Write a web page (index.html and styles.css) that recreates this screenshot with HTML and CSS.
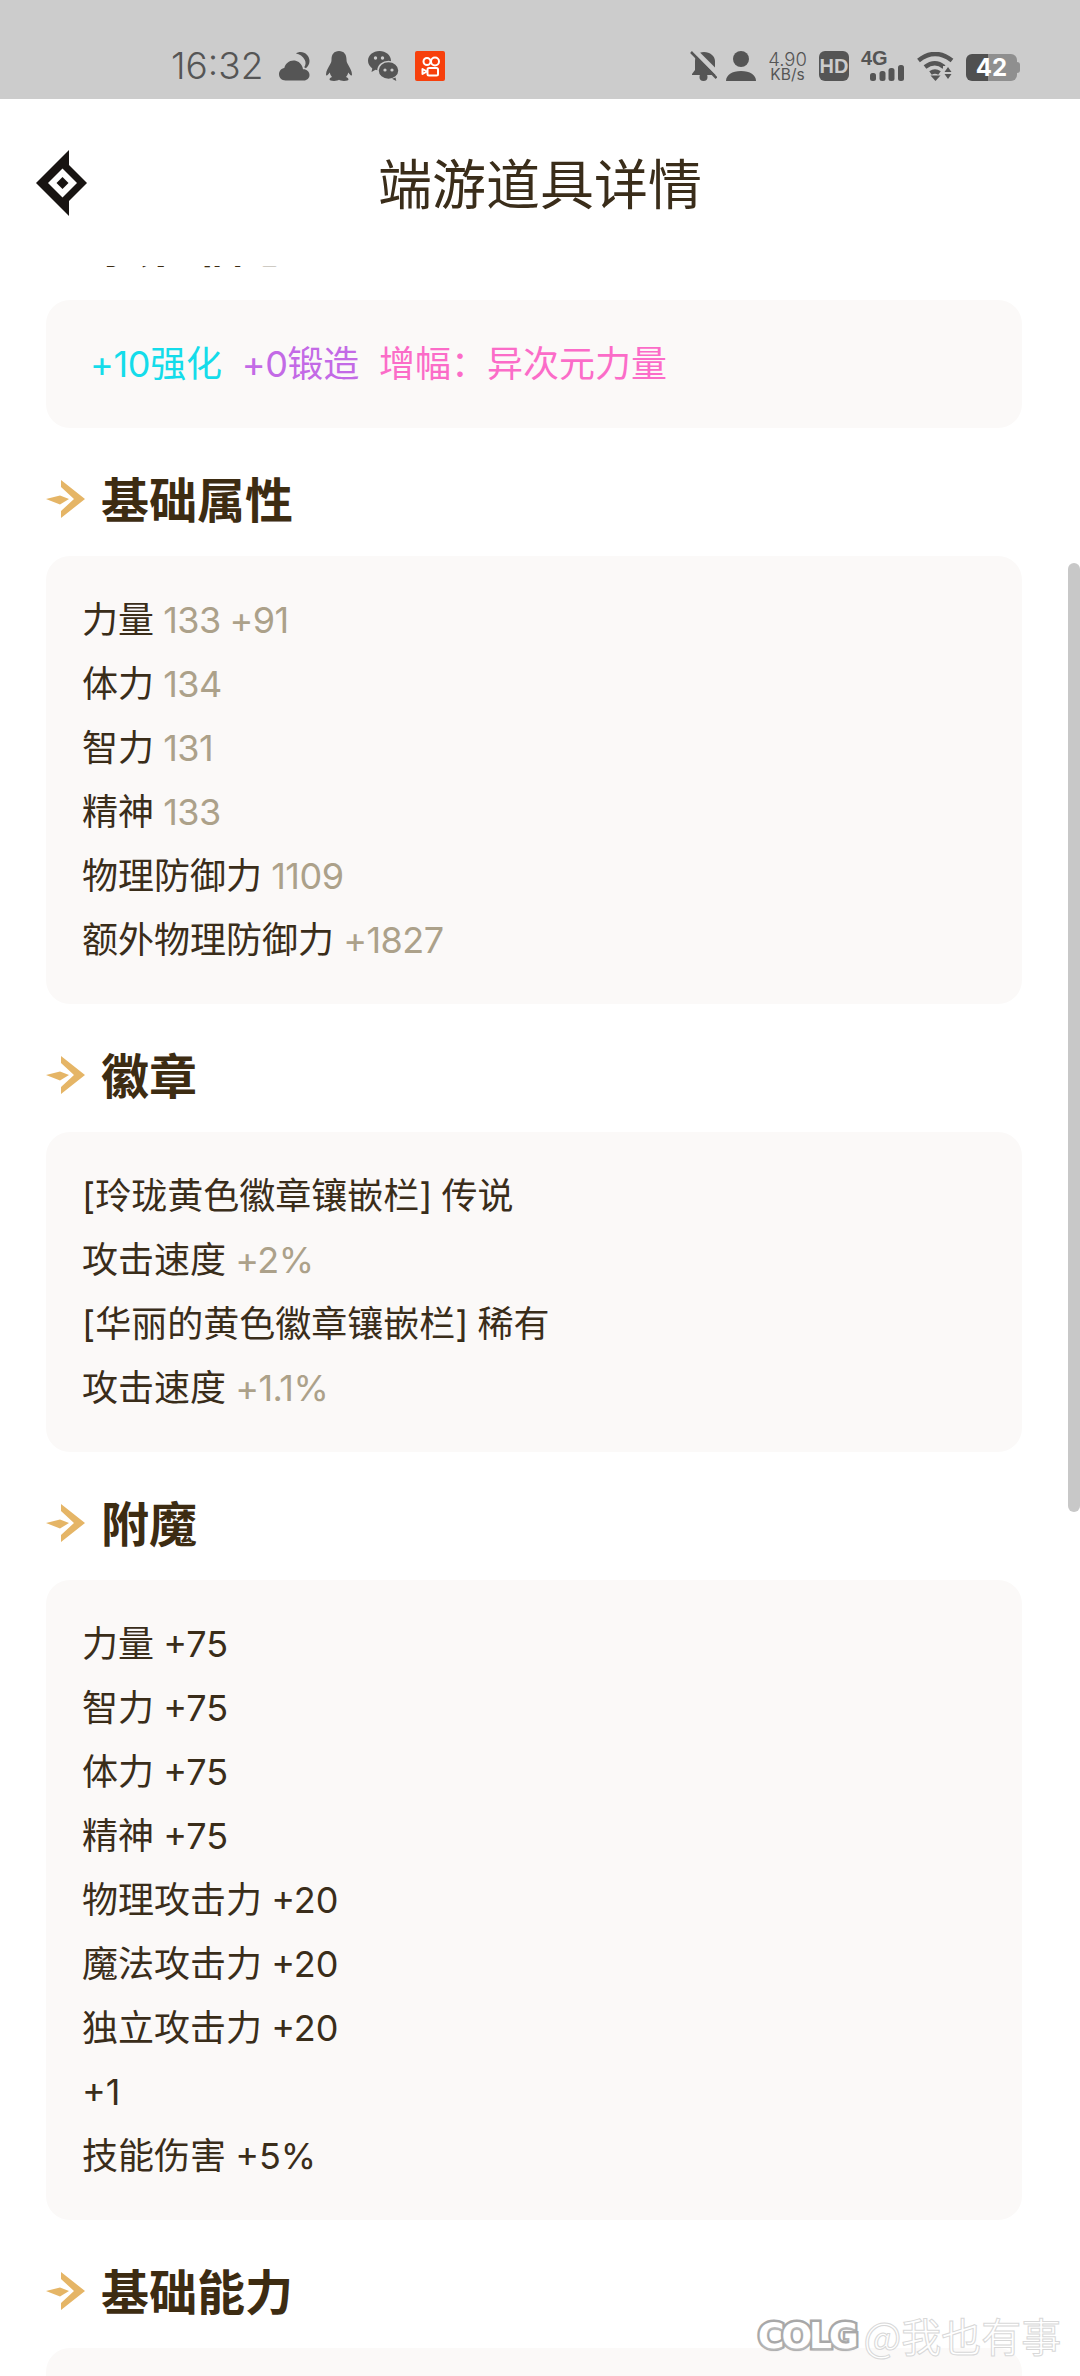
FILE: index.html
```html
<!DOCTYPE html>
<html lang="zh-CN">
<head>
    <meta charset="UTF-8">
    <meta name="viewport" content="width=device-width, initial-scale=1.0">
    <title>端游道具详情</title>
    <link rel="stylesheet" href="styles.css">
</head>
<body>

    <div class="statusbar">
        <div class="status-left">
            <span class="time">16:32</span>
            <svg class="ic-cloud" viewBox="0 0 31 29"><path d="M6.500 28.500C2.800 28.500 0 25.800 0 22.300c0-3.200 2.300-5.700 5.300-6.200C6.300 11.700 10 8.500 14.500 8.500c3.900 0 7.200 2.400 8.600 5.800.5 1 .8 2 .9 3 3.600-.2 6.500 2.300 6.500 5.700 0 3.100-2.400 5.500-5.700 5.500z"/><path d="M17 1.500C18.300.5 19.800 0 21.500 0c5 0 9 4 9 9 0 3-1.400 5.600-3.600 7.200-.5-.4-1.100-.7-1.700-.9C26.800 12.800 27 10.500 25.800 8 24 4.300 20.500 2 17 1.500z"/></svg>
            <svg class="ic-qq" viewBox="0 0 26 30"><path d="M13 0C8 0 5.500 3.500 5.500 8.500c0 2-.5 3.500-1.500 5C2.500 16 0 20 0 23.500c0 1 .6 1.200 1.300.7.900-.7 1.700-1.600 2.400-2.700.4 1.700 1.200 3.200 2.300 4.400-1.500.6-2.500 1.400-2.500 2.400 0 1 1.500 1.700 4.500 1.700 2.500 0 4-.5 5-1.200 1 .7 2.500 1.200 5 1.200 3 0 4.500-.7 4.500-1.700 0-1-1-1.800-2.500-2.400 1.100-1.200 1.900-2.700 2.300-4.400.7 1.100 1.500 2 2.400 2.700.7.5 1.300.3 1.300-.7 0-3.500-2.500-7.500-4-10-1-1.500-1.500-3-1.500-5C20.500 3.500 18 0 13 0z"/></svg>
            <svg class="ic-wechat" viewBox="0 0 31 30">
                <path d="M11.500 0C5.100 0 0 4.300 0 9.800c0 3.100 1.700 5.800 4.300 7.600L3.500 21l4-2.200c1.200.4 2.600.7 4 .7 6.400 0 11.500-4.300 11.500-9.700S17.900 0 11.500 0z"/>
                <ellipse class="ic-cut" cx="20.500" cy="19.500" rx="10.500" ry="9"/>
                <path d="M27.500 26.500l.8 3.500-4.300-2.200z"/>
                <circle class="ic-eye" cx="7.500" cy="7" r="1.700"/>
                <circle class="ic-eye" cx="14.500" cy="7" r="1.700"/>
                <circle class="ic-eye" cx="17" cy="19" r="1.600"/>
                <circle class="ic-eye" cx="24" cy="19" r="1.600"/>
            </svg>
            <svg class="ic-ks" viewBox="0 0 30 30">
                <rect width="30" height="30" rx="2" fill="#f7400c"/>
                <g fill="none" stroke="#fff" stroke-width="2">
                    <circle cx="12" cy="10.500" r="3.500"/>
                    <circle cx="20" cy="10.500" r="4"/>
                    <rect x="12.500" y="17" width="10.500" height="7.500" rx="1.500"/>
                    <path d="M12 20.500l-4.500-2.500v5z" stroke-linejoin="round"/>
                </g>
            </svg>
        </div>
        <div class="status-right">
            <svg class="ic-bell" viewBox="0 0 27 30">
                <path d="M14 1C8 1 5 5 5 10v9l-3 4v1h24v-1l-1-4v-9c0-5-5-9-11-9z"/>
                <circle cx="13.500" cy="26" r="4"/>
                <path class="ic-slash" d="M0 0l27 27"/>
                <path class="ic-line" d="M1 1l25.500 26"/>
            </svg>
            <svg class="ic-user" viewBox="0 0 30 30"><circle cx="15" cy="8" r="8"/><path d="M0 30c0-6 6-10 15-10s15 4 15 10z"/></svg>
            <div class="speed"><span class="speed-num">4.90</span><span class="speed-unit">KB/s</span></div>
            <div class="hd">HD</div>
            <div class="net">
                <span class="net-type">4G</span>
                <svg class="net-bars" viewBox="0 0 34 16"><rect x="0" y="8" width="6" height="8" rx="2.500"/><rect x="9.500" y="6" width="6" height="10" rx="2.500"/><rect x="18.500" y="3" width="6" height="13" rx="2.500"/><rect x="28" y="0" width="6" height="16" rx="2.500"/></svg>
            </div>
            <svg class="ic-wifi" viewBox="0 0 37 29">
                <g fill="none" stroke="#555" stroke-width="4.500">
                    <path d="M1.500 8.500Q18 -4.500 35 8.500"/>
                    <path d="M8 15Q18 7.500 27 15"/>
                    <path d="M13.500 21Q18 18 22.500 21"/>
                </g>
                <path d="M13.500 23.500h10L18.500 29z"/>
                <path class="ic-cut-fill" d="M26 14h11v15H26z"/>
                <path d="M31 15l3.500 5h-7zM27.500 22h7L31 27z"/>
            </svg>
            <div class="battery"><div class="batt-body">42</div><div class="batt-nub"></div></div>
        </div>
    </div>

    <div class="topbar">
        <svg class="logo" viewBox="0 0 51 66">
            <path fill="#181412" d="M33 0v15l18 18-18 18v15L0 33z"/>
            <path fill="#fff" d="M26.500 18.500l14.500 14.500-14.500 14.500-14.500-14.500z"/>
            <path fill="#181412" d="M26.500 27l6 6-6 6-6-6z"/>
        </svg>
        <h1 class="page-title">端游道具详情</h1>
    </div>

    <main class="scroller">
        <div class="content">
            <h2 class="sec-title"><svg class="arrow" viewBox="0 0 39 38"><path d="M15 0l24 19-24 19v-7l13-12-13-12z"/><path d="M0 19l14-3.500 9 3.500-9 5.500z"/></svg>强化信息</h2>
            <div class="card card-tags">
                <span class="tag-cyan">+10强化</span>
                <span class="tag-purple">+0锻造</span>
                <span class="tag-pink">增幅：异次元力量</span>
            </div>

            <h2 class="sec-title"><svg class="arrow" viewBox="0 0 39 38"><path d="M15 0l24 19-24 19v-7l13-12-13-12z"/><path d="M0 19l14-3.500 9 3.500-9 5.500z"/></svg>基础属性</h2>
            <div class="card">
                <p>力量 <span class="val">133 +91</span></p>
                <p>体力 <span class="val">134</span></p>
                <p>智力 <span class="val">131</span></p>
                <p>精神 <span class="val">133</span></p>
                <p>物理防御力 <span class="val">1109</span></p>
                <p>额外物理防御力 <span class="val">+1827</span></p>
            </div>

            <h2 class="sec-title"><svg class="arrow" viewBox="0 0 39 38"><path d="M15 0l24 19-24 19v-7l13-12-13-12z"/><path d="M0 19l14-3.500 9 3.500-9 5.500z"/></svg>徽章</h2>
            <div class="card">
                <p>[玲珑黄色徽章镶嵌栏] 传说</p>
                <p>攻击速度 <span class="val">+2%</span></p>
                <p>[华丽的黄色徽章镶嵌栏] 稀有</p>
                <p>攻击速度 <span class="val">+1.1%</span></p>
            </div>

            <h2 class="sec-title"><svg class="arrow" viewBox="0 0 39 38"><path d="M15 0l24 19-24 19v-7l13-12-13-12z"/><path d="M0 19l14-3.500 9 3.500-9 5.500z"/></svg>附魔</h2>
            <div class="card">
                <p>力量 +75</p>
                <p>智力 +75</p>
                <p>体力 +75</p>
                <p>精神 +75</p>
                <p>物理攻击力 +20</p>
                <p>魔法攻击力 +20</p>
                <p>独立攻击力 +20</p>
                <p>+1</p>
                <p>技能伤害 +5%</p>
            </div>

            <h2 class="sec-title"><svg class="arrow" viewBox="0 0 39 38"><path d="M15 0l24 19-24 19v-7l13-12-13-12z"/><path d="M0 19l14-3.500 9 3.500-9 5.500z"/></svg>基础能力</h2>
            <div class="card">
                <p>&nbsp;</p>
            </div>
        </div>
    </main>

    <div class="scrollbar"></div>
    <div class="watermark"><span class="wm-logo">COLG</span><span class="wm-text">@我也有事</span></div>

</body>
</html>
```

FILE: styles.css
```css
* {
    box-sizing: border-box;
}
html, body {
    margin: 0;
    height: 2376px;
}
body {
    width: 1080px;
    position: relative;
    overflow: hidden;
    display: flex;
    flex-direction: column;
    background-color: #fff;
    color: #3a2d1a;
    font-family: Inter, "Noto Sans CJK SC", sans-serif;
}

/* status bar */
.statusbar {
    height: 99px;
    flex: none;
    display: flex;
    justify-content: space-between;
    align-items: flex-start;
    padding: 51px 60px 0 171px;
    background-color: #ccc;
    fill: #555;
    color: #555;
}
.status-left, .status-right {
    display: flex;
    align-items: center;
    height: 30px;
}
.status-left {
    gap: 16px;
}
.status-right {
    gap: 12px;
}
.time {
    font-size: 37px;
    line-height: 30px;
    width: 92px;
    font-weight: 300;
    white-space: nowrap;
}
.ic-cloud {
    width: 31px;
    height: 29px;
}
.ic-qq {
    width: 26px;
    height: 30px;
}
.ic-wechat {
    width: 31px;
    height: 30px;
}
.ic-ks {
    width: 30px;
    height: 30px;
}
.ic-cut {
    stroke: #ccc;
    stroke-width: 1.5;
}
.ic-eye {
    fill: #ccc;
}
.ic-bell {
    width: 27px;
    height: 30px;
    margin-right: -3px;
}
.ic-slash {
    stroke: #ccc;
    stroke-width: 5;
    transform: translate(3px, -2px);
}
.ic-line {
    stroke: #555;
    stroke-width: 2.5;
}
.ic-user {
    width: 30px;
    height: 30px;
}
.speed {
    width: 39px;
    display: flex;
    flex-direction: column;
    align-items: center;
}
.speed-num {
    font-size: 18.5px;
    line-height: 17px;
    font-weight: 300;
}
.speed-unit {
    font-size: 15.5px;
    line-height: 13px;
}
.hd {
    width: 30px;
    height: 30px;
    border-radius: 6px;
    background-color: #555;
    color: #ccc;
    font-family: "Liberation Sans", sans-serif;
    font-size: 20px;
    font-weight: 700;
    line-height: 30px;
    text-align: center;
}
.net {
    width: 44px;
    height: 30px;
    display: flex;
    flex-direction: column;
}
.net-type {
    font-family: "Liberation Sans", sans-serif;
    font-size: 20px;
    font-weight: 700;
    line-height: 15px;
}
.net-bars {
    width: 34px;
    height: 16px;
    margin: -1px 0 0 9px;
}
.ic-wifi {
    width: 37px;
    height: 29px;
}
.ic-cut-fill {
    fill: #ccc;
}
.battery {
    display: flex;
    align-items: center;
    height: 27px;
    margin-top: 3px;
}
.batt-body {
    width: 51px;
    height: 27px;
    border-radius: 6px;
    background: linear-gradient(to right, #505050 22px, #8f8f8f 22px);
    color: #fff;
    font-size: 24px;
    font-weight: 700;
    line-height: 27px;
    text-align: center;
}
.batt-nub {
    width: 3px;
    height: 11px;
    border-radius: 0 3px 3px 0;
    background-color: #8f8f8f;
}

/* title bar */
.topbar {
    height: 167px;
    flex: none;
    display: grid;
    grid-template-columns: 1fr auto 1fr;
    align-items: center;
    background-color: #fff;
}
.logo {
    width: 51px;
    height: 66px;
    margin: 1px 0 0 36px;
}
.page-title {
    grid-column: 2;
    margin: 7px 0 0;
    font-size: 54px;
    font-weight: 400;
    line-height: 70px;
    color: #3a2d1a;
}

/* content */
.scroller {
    flex: 1;
    overflow: hidden;
    min-height: 0;
}
.content {
    margin-top: -94px;
    padding: 0 58px 0 46px;
}
.sec-title {
    height: 128px;
    margin: 0;
    padding-top: 9px;
    display: flex;
    align-items: center;
    gap: 16px;
    font-size: 48px;
    font-weight: 700;
    color: #3d2c12;
}
.arrow {
    width: 39px;
    height: 38px;
    flex: none;
    fill: #e5b566;
    position: relative;
    top: 2px;
}
.card {
    padding: 32px 36px;
    border-radius: 24px;
    background-color: #fbf9f8;
}
.card p {
    margin: 0;
    font-size: 36px;
    line-height: 64px;
    font-weight: 400;
    word-spacing: -1px;
}
.val {
    color: #aca18a;
    letter-spacing: -0.5px;
}
.card-tags {
    display: flex;
    gap: 20px;
    padding-left: 44px;
    font-size: 36px;
    line-height: 64px;
}
.tag-cyan {
    color: #14dcea;
    letter-spacing: -0.3px;
}
.tag-purple {
    color: #c36ae6;
    letter-spacing: -0.3px;
}
.tag-pink {
    color: #fb6cc8;
}

/* overlays */
.scrollbar {
    position: absolute;
    left: 1068px;
    top: 563px;
    width: 12px;
    height: 949px;
    border-radius: 6px;
    background-color: #c8c8c8;
}
.watermark {
    position: absolute;
    left: 758px;
    top: 2306px;
    display: flex;
    align-items: center;
    gap: 8px;
    color: #fff;
}
.wm-logo {
    font-family: "DejaVu Sans", sans-serif;
    font-size: 36px;
    font-weight: 700;
    letter-spacing: -3px;
    -webkit-text-stroke: 5px #a8a8a8;
    paint-order: stroke fill;
    text-shadow: 0 2px 2px #bbb;
}
.wm-text {
    font-family: "Noto Sans CJK SC", sans-serif;
    font-size: 40px;
    font-weight: 400;
    -webkit-text-stroke: 1px #d8d8d8;
}
```
